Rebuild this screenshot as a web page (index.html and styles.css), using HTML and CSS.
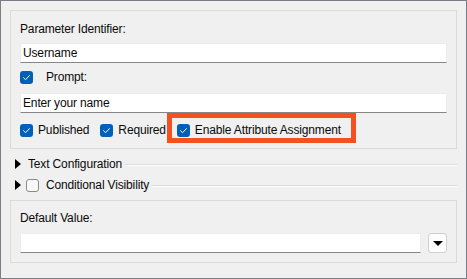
FILE: index.html
```html
<!DOCTYPE html>
<html>
<head>
<meta charset="utf-8">
<link rel="stylesheet" href="styles.css">
</head>
<body>
<div class="window">
  <div class="group group-top">
    <div class="label-row">Parameter Identifier:</div>
    <div class="field field-first">Username</div>
    <div class="check-row prompt-row">
      <span class="cb checked"><svg viewBox="0 0 13 13" width="13" height="13"><path d="M3.6 6.8 L5.6 8.7 L9.4 4.6" fill="none" stroke="#fff" stroke-width="1" stroke-linecap="round" stroke-linejoin="round"/></svg></span>
      <span class="prompt-text">Prompt:</span>
    </div>
    <div class="field field-second">Enter your name</div>
    <div class="check-row options-row">
      <label class="opt"><span class="cb checked"><svg viewBox="0 0 13 13" width="13" height="13"><path d="M3.6 6.8 L5.6 8.7 L9.4 4.6" fill="none" stroke="#fff" stroke-width="1" stroke-linecap="round" stroke-linejoin="round"/></svg></span><span>Published</span></label>
      <label class="opt"><span class="cb checked"><svg viewBox="0 0 13 13" width="13" height="13"><path d="M3.6 6.8 L5.6 8.7 L9.4 4.6" fill="none" stroke="#fff" stroke-width="1" stroke-linecap="round" stroke-linejoin="round"/></svg></span><span>Required</span></label>
      <label class="opt highlighted"><span class="cb checked"><svg viewBox="0 0 13 13" width="13" height="13"><path d="M3.6 6.8 L5.6 8.7 L9.4 4.6" fill="none" stroke="#fff" stroke-width="1" stroke-linecap="round" stroke-linejoin="round"/></svg></span><span>Enable Attribute Assignment</span></label>
    </div>
  </div>

  <div class="section-row section-text">
    <span class="tri"></span>
    <span class="section-title title-text">Text Configuration</span>
    <span class="rule"></span>
  </div>
  <div class="section-row section-cond">
    <span class="tri"></span>
    <span class="cb unchecked"></span>
    <span class="section-title title-cond">Conditional Visibility</span>
    <span class="rule"></span>
  </div>

  <div class="group group-bottom">
    <div class="label-row">Default Value:</div>
    <div class="value-row">
      <div class="field field-value"></div>
      <div class="drop-btn"><span class="drop-arrow"></span></div>
    </div>
  </div>
</div>
</body>
</html>
```

FILE: styles.css
```css
*, *::before, *::after { box-sizing: border-box; }
html, body { margin: 0; padding: 0; }
body {
  font-family: "Liberation Sans", Arial, sans-serif;
  font-size: 12px;
  letter-spacing: -0.15px;
  color: #0a0a0a;
  background: #f0f0f0;
}
.window {
  width: 467px;
  height: 279px;
  border: 1px solid #7b7f85;
  background: #f0f0f0;
  padding: 9px 9px 0 9px;
  display: flex;
  flex-direction: column;
}
.group {
  border: 1px solid #dadada;
  display: flex;
  flex-direction: column;
}
.group-top {
  height: 139px;
  padding: 10px 9px 0 9px;
}
.label-row {
  height: 16px;
  line-height: 16px;
}
.field {
  height: 20px;
  background: #fff;
  border: 1px solid #ececec;
  border-bottom-color: #868686;
  border-radius: 1px;
  padding-left: 2px;
  line-height: 18px;
}
.field-first { margin-top: 6px; }
.check-row {
  display: flex;
  align-items: center;
  height: 16px;
  line-height: 16px;
}
.prompt-row { margin-top: 6px; }
.prompt-text { margin-left: 13px; }
.field-second { margin-top: 8px; }
.options-row {
  margin-top: 9px;
  height: 16px;
  gap: 11px;
}
.opt {
  display: flex;
  align-items: center;
  gap: 5px;
  height: 16px;
}
.highlighted { position: relative; }
.highlighted::after {
  content: "";
  position: absolute;
  left: -10px;
  top: -9px;
  width: 189px;
  height: 30px;
  border: 5px solid #f4511e;
  pointer-events: none;
}
.cb {
  width: 13px;
  height: 13px;
  border-radius: 3px;
  display: inline-block;
  flex: none;
}
.cb svg { display: block; }
.cb.checked { background: #005fb8; }
.cb.unchecked {
  background: #f9f9f9;
  border: 1px solid #8a8a8a;
}
.section-row {
  display: flex;
  align-items: center;
  height: 16px;
  line-height: 16px;
  padding-left: 5px;
}
.section-text { margin-top: 7px; }
.section-cond { margin-top: 5px; }
.tri {
  width: 0;
  height: 0;
  border-top: 5px solid transparent;
  border-bottom: 5px solid transparent;
  border-left: 6px solid #000;
  flex: none;
}
.title-text { margin-left: 7px; }
.section-cond .cb { margin-left: 5px; }
.title-cond { margin-left: 7px; }
.rule {
  flex: 1;
  height: 2px;
  border-top: 1px solid #dcdcdc;
  border-bottom: 1px solid #ffffff;
  margin-left: 3px;
  margin-top: 1px;
}
.group-bottom {
  margin-top: 7px;
  height: 63px;
  padding: 9px 9px 0 9px;
}
.value-row {
  display: flex;
  gap: 7px;
  margin-top: 7px;
}
.field-value { flex: 1; }
.drop-btn {
  width: 19px;
  height: 20px;
  background: #fdfdfd;
  border: 1px solid #cfcfcf;
  border-radius: 3px;
  display: flex;
  align-items: center;
  justify-content: center;
}
.drop-arrow {
  width: 0;
  height: 0;
  border-left: 5px solid transparent;
  border-right: 5px solid transparent;
  border-top: 5px solid #000;
}
```
